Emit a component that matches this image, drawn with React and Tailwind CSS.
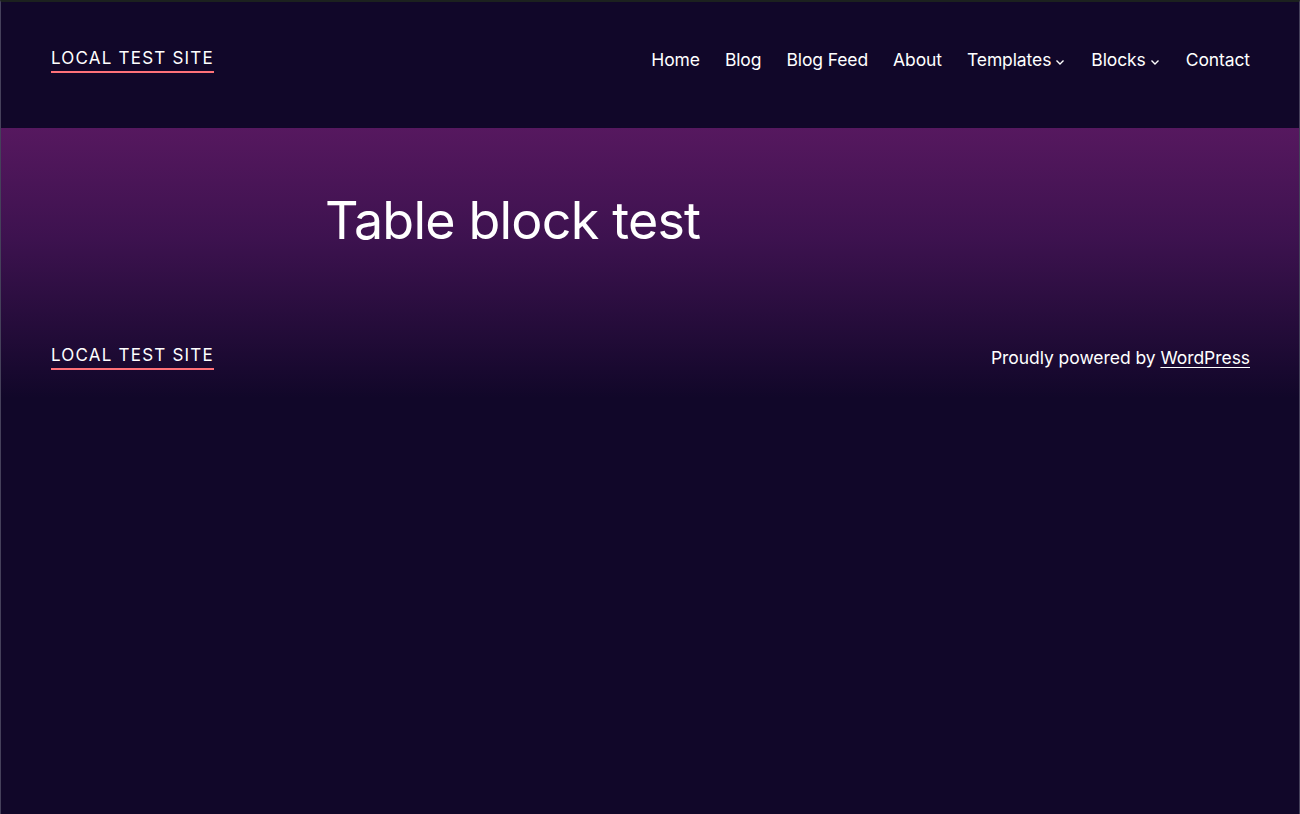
import React from "react";

const navItems = [
  { label: "Home" },
  { label: "Blog" },
  { label: "Blog Feed" },
  { label: "About" },
  { label: "Templates", sub: true },
  { label: "Blocks", sub: true },
  { label: "Contact" },
];

function Chevron() {
  return (
    <svg width="12" height="12" viewBox="0 0 12 12" className="ml-[3px] mt-[3px]" aria-hidden="true">
      <path d="M2.5 4.5 6 8l3.5-3.5" fill="none" stroke="currentColor" strokeWidth="1.4" />
    </svg>
  );
}

function SiteTitle() {
  return (
    <a
      href="#"
      className="text-[17px] uppercase tracking-[1.2px] leading-none text-white pb-[4px] border-b-2 border-[#ff7179]"
    >
      Local Test Site
    </a>
  );
}

export default function App() {
  return (
    <div
      className="min-h-[814px] bg-[#110729] text-white border-t-2 border-[#1c211f] border-x border-x-[#45405a] antialiased"
      style={{ fontFamily: "Inter, 'Noto Sans', sans-serif" }}
    >
      <header className="h-[126px] pl-[50px] pr-[49px] pt-[48px] flex items-start justify-between">
        <SiteTitle />
        <nav className="-mt-[3px] flex items-center gap-[25px] text-[17.5px] tracking-[-0.1px]">
          {navItems.map((item) => (
            <a key={item.label} href="#" className="flex items-center text-white">
              {item.label}
              {item.sub && <Chevron />}
            </a>
          ))}
        </nav>
      </header>

      <main className="bg-[linear-gradient(180deg,#56185f_0px,#3d124f_110px,#110729_270px)]">
        <section className="w-[650px] mx-auto pt-[62px] pb-[80px]">
          <h1 className="text-[52px] leading-[1.2] tracking-[-0.8px] font-normal">Table block test</h1>
        </section>

        <footer className="pl-[50px] pr-[49px] pt-[13px] pb-[44px] flex items-center justify-between">
          <SiteTitle />
          <p className="text-[17.5px] tracking-[-0.05px]">
            Proudly powered by{" "}
            <a href="#" className="underline underline-offset-[3px]">
              WordPress
            </a>
          </p>
        </footer>
      </main>
    </div>
  );
}
